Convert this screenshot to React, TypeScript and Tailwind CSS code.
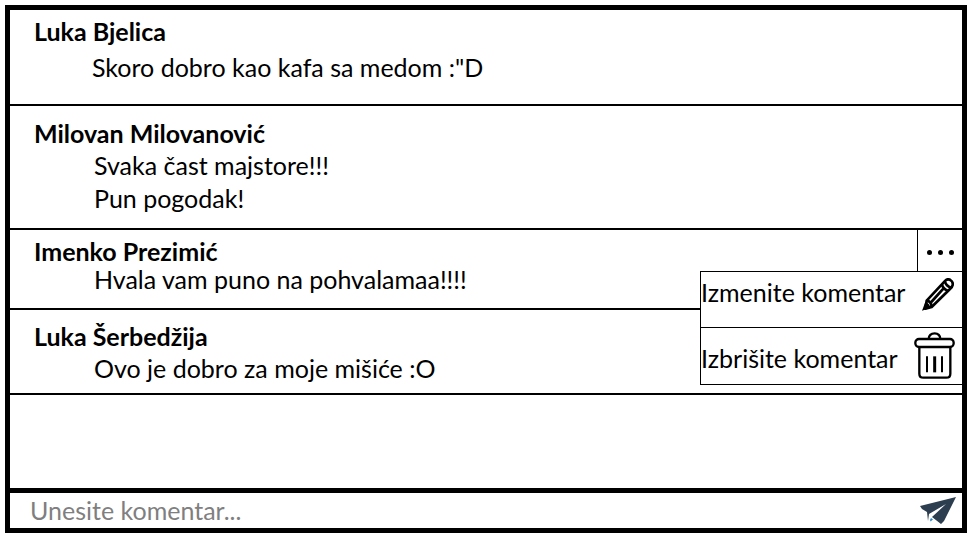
import { useState } from "react";
import type { ReactNode } from "react";

type Comment = {
  author: string;
  lines: string[];
  spacing: string;
  indent: string;
  own?: boolean;
};

const comments: Comment[] = [
  { author: "Luka Bjelica", lines: ['Skoro dobro kao kafa sa medom :"D'], spacing: "gap-2 pt-[7px] pb-[23px]", indent: "pl-[58px]" },
  { author: "Milovan Milovanović", lines: ["Svaka čast majstore!!!", "Pun pogodak!"], spacing: "gap-1 pt-[13px] pb-4", indent: "pl-[60px]" },
  { author: "Imenko Prezimić", lines: ["Hvala vam puno na pohvalamaa!!!!"], spacing: "pt-[7px] pb-[15px]", indent: "pl-[60px]", own: true },
  { author: "Luka Šerbedžija", lines: ["Ovo je dobro za moje mišiće :O"], spacing: "gap-1 pt-3 pb-[11px]", indent: "pl-[60px]" },
];

function PencilIcon() {
  return (
    <svg width="32" height="33" viewBox="0 0 96 99" fill="none" stroke="black" strokeWidth="8" strokeLinejoin="round" aria-hidden="true">
      <path d="M14 68 70 8Q77 1 85 6Q94 12 92 21Q91 27 84 33L29 87L10 92Z" />
      <path d="M14 68Q28 70 29 87M28 72 64 32M60 20Q63 33 77 38M69 11Q72 24 87 29" />
      <path d="M0 98 10 72Q22 76 26 89Z" fill="black" stroke="none" />
    </svg>
  );
}

function TrashIcon() {
  return (
    <svg width="41" height="47" viewBox="0 0 123 141" fill="none" stroke="black" strokeWidth="7" strokeLinejoin="round" aria-hidden="true">
      <path d="M44 21Q45 4 62 4Q78 4 79 21" />
      <rect x="4" y="21" width="115" height="24" rx="11" />
      <path d="M16 45V125Q16 137 28 137H97Q109 137 109 125V45" />
      <path d="M39 73V121M84 73V121" strokeWidth="6" />
      <path d="M62 73V121" strokeWidth="9" />
    </svg>
  );
}

function SendIcon() {
  return (
    <svg width="36" height="27" viewBox="0 0 36 27" aria-hidden="true">
      <path d="M36 0 0 9 2 12 7 15 8 24 9 17 26 7 12 20 21 27 24 24Z" fill="#2c3e50" />
      <path d="M11 21 13 22.500 10.500 24.500 10 23Z" fill="#2489ca" />
    </svg>
  );
}

function MenuItem({ label, className, children }: { label: string; className: string; children: ReactNode }) {
  return (
    <button type="button" role="menuitem" className={`flex w-full justify-between border-b border-black text-left ${className}`}>
      {label}
      {children}
    </button>
  );
}

function CommentActions() {
  const [open, setOpen] = useState(true);
  return (
    <>
      <button
        type="button"
        aria-label="Opcije komentara"
        aria-expanded={open}
        onClick={() => setOpen(!open)}
        className="absolute top-0 right-0 flex h-[41px] w-[45px] items-center justify-center gap-1.5 border-l border-black pt-1"
      >
        <span className="size-[5px] rounded-full bg-black" />
        <span className="size-[5px] rounded-full bg-black" />
        <span className="size-[5px] rounded-full bg-black" />
      </button>
      {open && (
        <div role="menu" className="absolute top-[41px] right-0 z-10 w-[262px] border-t border-l border-black bg-white">
          <MenuItem label="Izmenite komentar" className="h-14 items-start pt-1.5 pr-2">
            <PencilIcon />
          </MenuItem>
          <MenuItem label="Izbrišite komentar" className="h-[57px] items-end pr-[7px] pb-[5px] leading-[42px]">
            <TrashIcon />
          </MenuItem>
        </div>
      )}
    </>
  );
}

export default function App() {
  return (
    <div className="flex min-h-screen bg-white pt-[5px] pr-1.5 pb-1.5 pl-[5px] font-['Lato','Open_Sans',sans-serif] text-[25px] leading-7 text-black">
      <main className="flex flex-1 flex-col border-[5px] border-black">
        <section className="flex-1" aria-label="Komentari">
          {comments.map((comment) => (
            <article key={comment.author} className={`relative flex flex-col border-b-2 border-black pl-6 ${comment.spacing}`}>
              <h2 className="font-bold">{comment.author}</h2>
              <div className={`flex flex-col gap-[5px] ${comment.indent}`}>
                {comment.lines.map((line) => (
                  <p key={line}>{line}</p>
                ))}
              </div>
              {comment.own && <CommentActions />}
            </article>
          ))}
        </section>
        <form className="flex h-10 items-center border-t-[5px] border-black pr-1.5 pl-5" onSubmit={(e) => e.preventDefault()}>
          <input
            type="text"
            aria-label="Unesite komentar"
            placeholder="Unesite komentar..."
            className="min-w-0 flex-1 bg-transparent pb-0.5 outline-none placeholder:text-[#7f7f7f]"
          />
          <button type="submit" aria-label="Pošalji">
            <SendIcon />
          </button>
        </form>
      </main>
    </div>
  );
}
